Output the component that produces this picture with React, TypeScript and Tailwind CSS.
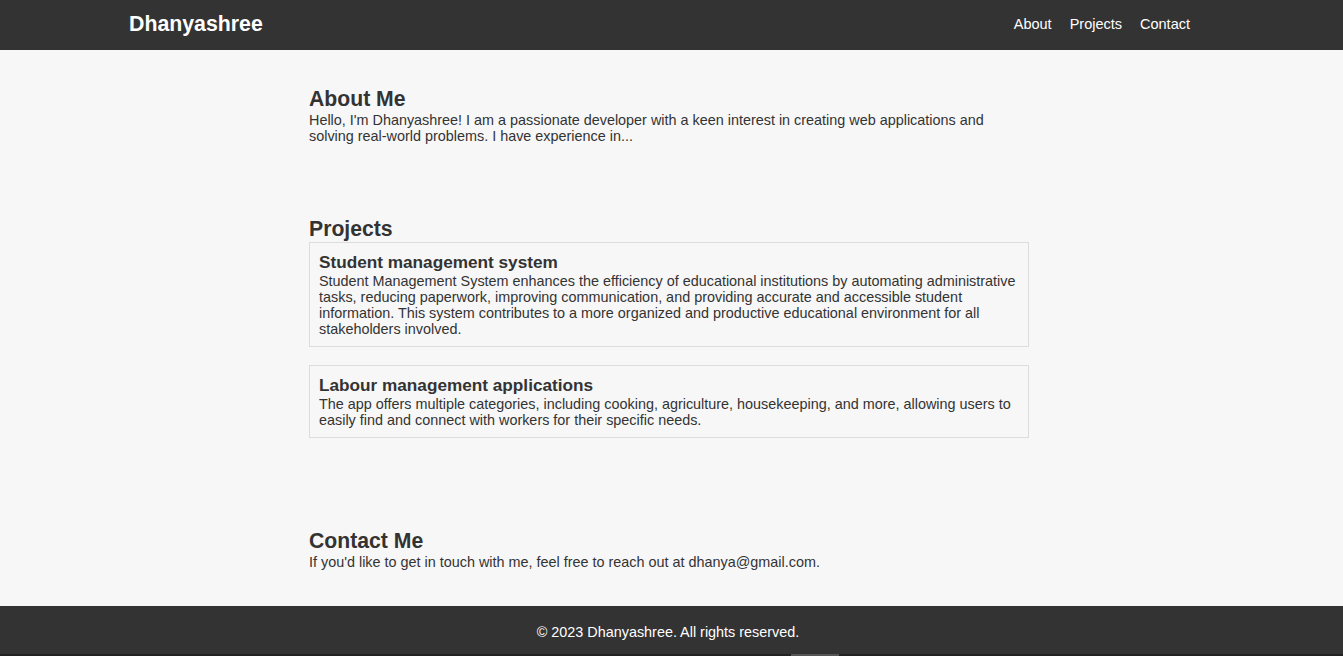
const projects = [
  {
    title: 'Student management system',
    text: 'Student Management System enhances the efficiency of educational institutions by automating administrative tasks, reducing paperwork, improving communication, and providing accurate and accessible student information. This system contributes to a more organized and productive educational environment for all stakeholders involved.',
  },
  {
    title: 'Labour management applications',
    text: 'The app offers multiple categories, including cooking, agriculture, housekeeping, and more, allowing users to easily find and connect with workers for their specific needs.',
  },
];

export default function App() {
  return (
    <div className="min-h-[656px] bg-[#f7f7f7] text-[#333] font-['Liberation_Sans',Arial,sans-serif] flex flex-col">
      <header className="h-[50px] bg-[#333] flex items-center justify-between pl-[129px] pr-[153px]">
        <h1 className="text-[21.3px] font-bold text-white">Dhanyashree</h1>
        <nav className="flex gap-[18px] text-[14.5px] text-white">
          <a href="#about">About</a>
          <a href="#projects">Projects</a>
          <a href="#contact">Contact</a>
        </nav>
      </header>

      <main className="ml-[309px] w-[720px] flex-1">
        <section id="about" className="pt-[35px] pb-9">
          <h2 className="text-[21.2px] leading-[27px] font-bold">About Me</h2>
          <p className="text-[14.4px] leading-4">
            Hello, I'm Dhanyashree! I am a passionate developer with a keen interest in creating web applications and
            solving real-world problems. I have experience in...
          </p>
        </section>

        <section id="projects" className="pt-[35px] pb-9">
          <h2 className="text-[21.2px] leading-[27px] font-bold">Projects</h2>
          {projects.map((p) => (
            <div key={p.title} className="border border-[#dcdcdc] p-[9px] mb-[18px]">
              <h3 className="pt-[1px] text-[17.2px] leading-[18px] font-bold">{p.title}</h3>
              <p className="mt-[2px] text-[14.4px] leading-4">{p.text}</p>
            </div>
          ))}
        </section>

        <section id="contact" className="pt-[35px] pb-9">
          <h2 className="text-[21.2px] leading-[27px] font-bold">Contact Me</h2>
          <p className="text-[14.4px] leading-4">
            If you'd like to get in touch with me, feel free to reach out at dhanya@gmail.com.
          </p>
        </section>
      </main>

      <footer className="bg-[#333]">
        <div className="h-[48px] flex items-center justify-center pt-[6px] pr-[7px] text-[14.4px] text-white">
          © 2023 Dhanyashree. All rights reserved.
        </div>
        <div className="h-[2px] bg-[#222] flex">
          <div className="ml-[791px] w-[48px] bg-[#555]" />
        </div>
      </footer>
    </div>
  );
}
